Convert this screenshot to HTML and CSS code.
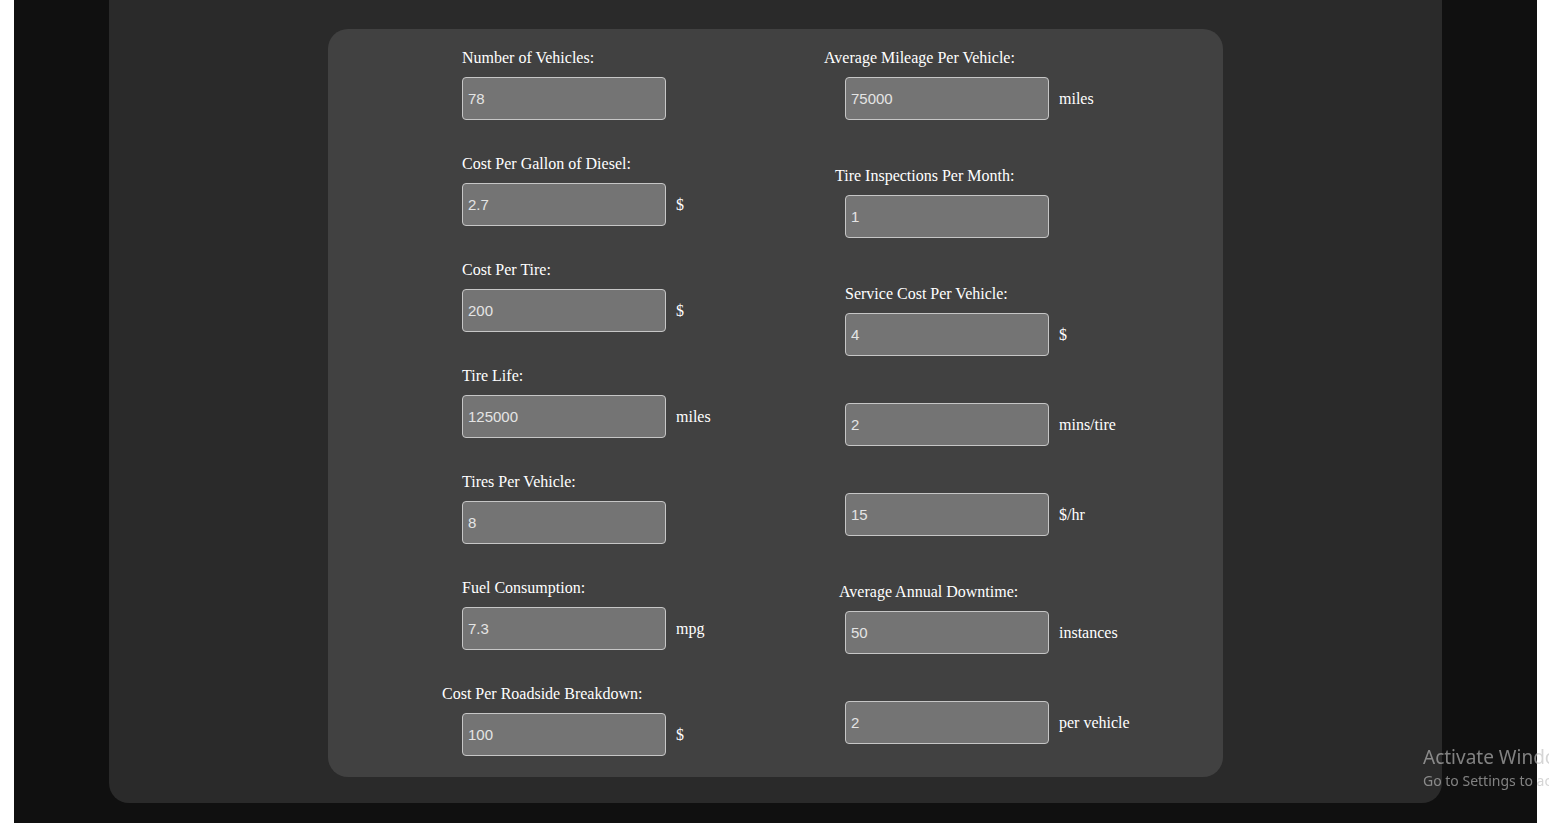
FILE: index.html
```html
<!DOCTYPE html>
<html lang="en">
<head>
<meta charset="utf-8">
<title>Fleet Tire Calculator</title>
<link rel="stylesheet" href="styles.css">
</head>
<body>
<div class="frame">
  <div class="panel">
    <form class="card">
      <div class="col col-left">
        <div class="group">
          <label class="lbl">Number of Vehicles:</label>
          <div class="row"><input class="field" type="text" value="78"></div>
        </div>
        <div class="group">
          <label class="lbl">Cost Per Gallon of Diesel:</label>
          <div class="row"><input class="field" type="text" value="2.7"><span class="unit">$</span></div>
        </div>
        <div class="group">
          <label class="lbl">Cost Per Tire:</label>
          <div class="row"><input class="field" type="text" value="200"><span class="unit">$</span></div>
        </div>
        <div class="group">
          <label class="lbl">Tire Life:</label>
          <div class="row"><input class="field" type="text" value="125000"><span class="unit">miles</span></div>
        </div>
        <div class="group">
          <label class="lbl">Tires Per Vehicle:</label>
          <div class="row"><input class="field" type="text" value="8"></div>
        </div>
        <div class="group">
          <label class="lbl">Fuel Consumption:</label>
          <div class="row"><input class="field" type="text" value="7.3"><span class="unit">mpg</span></div>
        </div>
        <div class="group">
          <label class="lbl lbl-out20">Cost Per Roadside Breakdown:</label>
          <div class="row"><input class="field" type="text" value="100"><span class="unit">$</span></div>
        </div>
      </div>
      <div class="col col-right">
        <div class="group">
          <label class="lbl lbl-out21">Average Mileage Per Vehicle:</label>
          <div class="row"><input class="field" type="text" value="75000"><span class="unit">miles</span></div>
        </div>
        <div class="group">
          <label class="lbl lbl-out10">Tire Inspections Per Month:</label>
          <div class="row"><input class="field" type="text" value="1"></div>
        </div>
        <div class="group">
          <label class="lbl">Service Cost Per Vehicle:</label>
          <div class="row"><input class="field" type="text" value="4"><span class="unit">$</span></div>
        </div>
        <div class="group">
          <div class="row"><input class="field" type="text" value="2"><span class="unit">mins/tire</span></div>
        </div>
        <div class="group">
          <div class="row"><input class="field" type="text" value="15"><span class="unit">$/hr</span></div>
        </div>
        <div class="group">
          <label class="lbl lbl-out6">Average Annual Downtime:</label>
          <div class="row"><input class="field" type="text" value="50"><span class="unit">instances</span></div>
        </div>
        <div class="group">
          <div class="row"><input class="field" type="text" value="2"><span class="unit">per vehicle</span></div>
        </div>
      </div>
    </form>
  </div>
</div>
<div class="watermark">
  <div class="wm-title">Activate Windows</div>
  <div class="wm-sub">Go to Settings to activate Windows.</div>
</div>
</body>
</html>
```
FILE: styles.css
```css
html, body {
  margin: 0;
  padding: 0;
  background: #ffffff;
  overflow: hidden;
}

.frame {
  margin-left: 14px;
  width: 1523px;
  height: 823px;
  background: #101010;
  overflow: hidden;
}

.panel {
  margin-left: 95px;
  width: 1333px;
  height: 803px;
  box-sizing: border-box;
  padding-top: 29px;
  background: #2a2a2a;
  border-radius: 0 0 20px 20px;
}

.card {
  margin: 0 0 0 219px;
  width: 895px;
  height: 748px;
  box-sizing: border-box;
  padding: 20px 0 0 134px;
  background: #414141;
  border-radius: 20px;
  display: grid;
  grid-template-columns: 383px 1fr;
  align-items: start;
}

.col {
  display: flex;
  flex-direction: column;
}

.col-left .group {
  margin-bottom: 35px;
}

.col-right .group {
  margin-bottom: 47px;
}

.lbl {
  display: block;
  font-family: "Liberation Serif", "Times New Roman", serif;
  font-size: 16px;
  line-height: 18px;
  color: #ffffff;
  margin-bottom: 10px;
  white-space: nowrap;
}

.lbl-out20 { margin-left: -20px; }
.lbl-out21 { margin-left: -21px; }
.lbl-out10 { margin-left: -10px; }
.lbl-out6 { margin-left: -6px; }

.row {
  display: flex;
  align-items: baseline;
  height: 43px;
}

.field {
  box-sizing: border-box;
  width: 204px;
  height: 43px;
  margin: 0;
  padding: 0 5px;
  border: 1px solid #c6c6c6;
  border-radius: 4px;
  background: #747474;
  color: #e4e4e4;
  font-family: "Liberation Sans", Arial, sans-serif;
  font-size: 15px;
  outline: none;
}

.unit {
  margin-left: 10px;
  font-family: "Liberation Serif", "Times New Roman", serif;
  font-size: 16px;
  color: #ffffff;
  white-space: nowrap;
}

.watermark {
  position: fixed;
  left: 1423px;
  top: 745px;
  white-space: nowrap;
  font-family: "Noto Sans", "Open Sans", sans-serif;
  color: rgba(190, 190, 190, 0.65);
  pointer-events: none;
}

.wm-title {
  font-size: 19px;
  line-height: 24px;
}

.wm-sub {
  font-size: 14px;
  line-height: 22px;
  margin-top: 1px;
}
```
